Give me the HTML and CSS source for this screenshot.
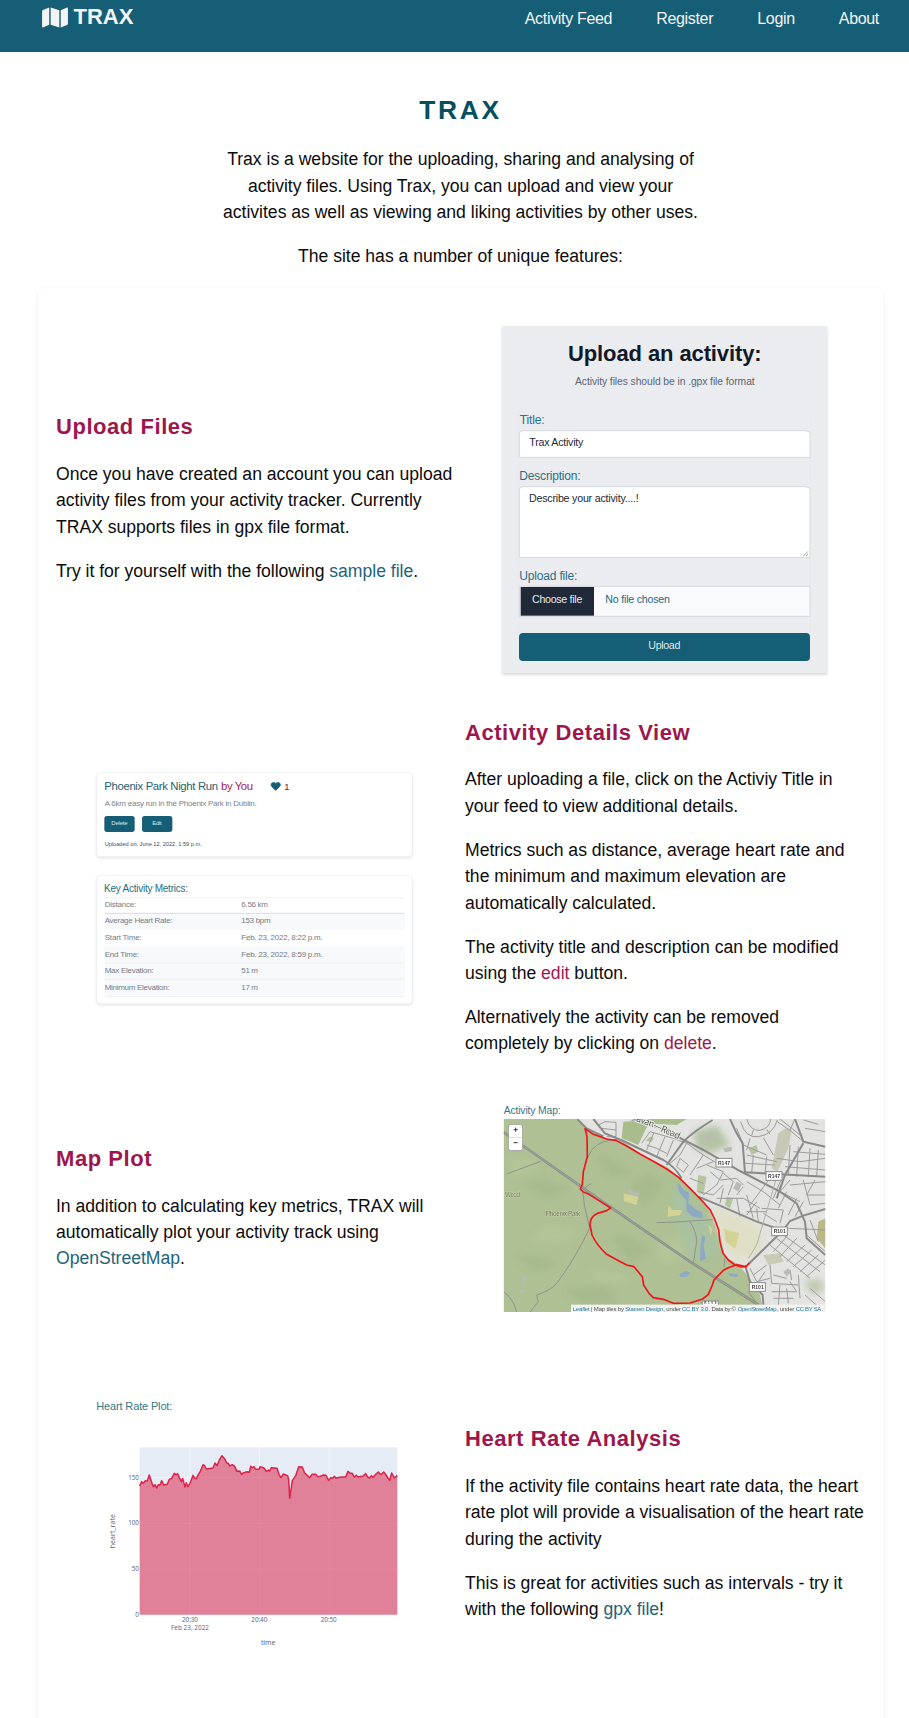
FILE: index.html
```html
<!DOCTYPE html>
<html lang="en">
<head>
<meta charset="utf-8">
<title>TRAX</title>
<link rel="stylesheet" href="styles.css">
</head>
<body>
<header class="navbar">
  <a class="brand">
    <svg class="brand-icon" viewBox="0 0 576 512"><path fill="currentColor" d="M0 117v346c0 12 12 20 23 15l137-62V32L20 88C8 93 0 104 0 117zM192 416l192 64V96L192 32zM554 34L416 96v384l140-56c12-5 20-16 20-30V49c0-11-11-19-22-15z"/></svg>
    <span>TRAX</span>
  </a>
  <nav class="links"><a>Activity Feed</a><a>Register</a><a>Login</a><a>About</a></nav>
</header>
<main class="page">
  <section class="intro">
    <h1>TRAX</h1>
    <p>Trax is a website for the uploading, sharing and analysing of<br>activity files. Using Trax, you can upload and view your<br>activites as well as viewing and liking activities by other uses.</p>
    <p>The site has a number of unique features:</p>
  </section>
  <section class="features">
    <article class="row row-upload">
      <div class="copy">
        <h2>Upload Files</h2>
        <p>Once you have created an account you can upload<br>activity files from your activity tracker. Currently<br>TRAX supports files in gpx file format.</p>
        <p>Try it for yourself with the following <a class="teal">sample file</a>.</p>
      </div>
      <svg class="shot" width="350" height="384" viewBox="0 -12 1050 1152">
        <rect class="form-shadow" x="36" y="48" width="975" height="1041" fill="#ebecf0"/>
        <path d="M86 320V970M961 320V970" stroke="#e5e7eb" stroke-width="2"/>
        <text x="234" y="152" font-size="66" font-weight="700" fill="#111827" textLength="581">Upload an activity:</text>
        <text x="255" y="225" font-size="31" fill="#5b6472" textLength="539">Activity files should be in .gpx file format</text>
        <g font-size="36" fill="#2b6f84">
          <text x="89" y="343" textLength="75">Title:</text>
          <text x="88" y="511" textLength="184">Description:</text>
          <text x="88" y="809" textLength="174">Upload file:</text>
        </g>
        <g fill="#fff" stroke="#d5d9e0" stroke-width="3">
          <path d="M88 442V374Q88 362 100 362H948Q960 362 960 374V442Z"/>
          <path d="M88 742V542Q88 530 100 530H948Q960 530 960 542V742Z"/>
          <rect x="88" y="829" width="872" height="90" fill="#f9fafc"/>
        </g>
        <path d="M940 738L954 724M948 738L954 732" stroke="#777" stroke-width="2"/>
        <rect x="92" y="831" width="220" height="86" fill="#1f2937"/>
        <g font-size="32">
          <text x="118" y="409" fill="#1f2937" textLength="162">Trax Activity</text>
          <text x="117" y="577" fill="#1f2937" textLength="329">Describe your activity....!</text>
          <text x="126" y="880" fill="#e8eaee" textLength="151">Choose file</text>
          <text x="346" y="880" fill="#246b80" textLength="194">No file chosen</text>
        </g>
        <rect x="87" y="969" width="873" height="84" rx="12" fill="#155e75"/>
        <text x="475" y="1017" font-size="32" fill="#dfe9ed" textLength="96">Upload</text>
      </svg>
    </article>

    <article class="row row-details">
      <svg class="shot" width="350" height="266" viewBox="1 -3 1050 798">
        <g class="tile" fill="#fff" stroke="#ececee" stroke-width="2">
          <rect x="51" y="53" width="947" height="252" rx="12"/>
          <rect x="51" y="361" width="947" height="385" rx="12"/>
        </g>
        <text x="74" y="105" font-size="34" fill="#1d6372" textLength="341">Phoenix Park Night Run</text>
        <text x="424" y="105" font-size="34" fill="#a82257" textLength="96">by You</text>
        <path d="M588 106L577 95C571 87 577 83 582 83Q587 83 588 86Q590 83 595 83C601 83 605 88 599 95Z" fill="#155e75" stroke="#155e75" stroke-width="3"/>
        <text x="614" y="105" font-size="28" fill="#333">1</text>
        <text x="75" y="153" font-size="24" fill="#7b828c" textLength="456">A 6km easy run in the Phoenix Park in Dublin.</text>
        <rect x="74" y="183" width="91" height="48" rx="8" fill="#155e75"/>
        <rect x="187" y="183" width="91" height="48" rx="8" fill="#155e75"/>
        <g font-size="18" fill="#dbe6ea">
          <text x="95" y="210" textLength="49">Delete</text>
          <text x="218" y="210" textLength="28">Edit</text>
        </g>
        <text x="75" y="273" font-size="17" fill="#474e5c" textLength="291">Uploaded on: June 12, 2022, 1:59 p.m.</text>
        <text x="73" y="411" font-size="30" fill="#2a6d7e" textLength="252">Key Activity Metrics:</text>
        <path d="M75 476H975V526H75ZM75 573H975V725H75Z" fill="#f8f9fb"/>
        <path d="M75 428H975M75 624H975M75 673H975M75 725H975" stroke="#e9ebee" stroke-width="2"/>
        <path d="M75 475H975" stroke="#d9dbe1" stroke-width="3"/>
        <g font-size="24" fill="#757c87">
          <text x="75" y="456" textLength="95">Distance:</text><text x="485" y="456" textLength="80">6.56 km</text>
          <text x="75" y="505" textLength="204">Average Heart Rate:</text><text x="485" y="505" textLength="88">153 bpm</text>
          <text x="75" y="555" textLength="111">Start Time:</text><text x="485" y="555" textLength="244">Feb. 23, 2022, 8:22 p.m.</text>
          <text x="75" y="605" textLength="104">End Time:</text><text x="485" y="605" textLength="244">Feb. 23, 2022, 8:59 p.m.</text>
          <text x="75" y="654" textLength="147">Max Elevation:</text><text x="485" y="654" textLength="50">51 m</text>
          <text x="75" y="704" textLength="195">Minimum Elevation:</text><text x="485" y="704" textLength="50">17 m</text>
        </g>
      </svg>
      <div class="copy">
        <h2>Activity Details View</h2>
        <p>After uploading a file, click on the Activiy Title in<br>your feed to view additional details.</p>
        <p>Metrics such as distance, average heart rate and<br>the minimum and maximum elevation are<br>automatically calculated.</p>
        <p>The activity title and description can be modified<br>using the <a class="pink">edit</a> button.</p>
        <p>Alternatively the activity can be removed<br>completely by clicking on <a class="pink">delete</a>.</p>
      </div>
    </article>

    <article class="row row-map">
      <div class="copy">
        <h2>Map Plot</h2>
        <p>In addition to calculating key metrics, TRAX will<br>automatically plot your activity track using<br><a class="teal">OpenStreetMap</a>.</p>
      </div>
      <svg class="shot" width="350" height="225" viewBox="0 0 1050 675">
        <defs>
          <clipPath id="map"><rect x="41" y="72" width="965" height="579"/></clipPath>
          <filter id="soft"><feGaussianBlur stdDeviation="9"/></filter>
        </defs>
        <text x="41" y="58" font-size="31" fill="#34788a" textLength="171">Activity Map:</text>
        <g clip-path="url(#map)">
          <rect x="41" y="72" width="965" height="579" fill="#e3e3e1"/>
          <!-- parkland -->
          <path d="M41 72H262L290 102L345 130L400 140L470 188L530 215L570 248L625 305L662 350L690 430L705 485L745 508L775 545L810 600L822 651H41Z" fill="#aec094"/>
          <g filter="url(#soft)">
            <path d="M540 260L580 290L655 370L690 470L640 500L600 490L560 380Z" fill="#a9c1a0"/>
            <path d="M665 345L700 340L800 385Q835 440 800 480L745 500L710 470L690 420Z" fill="#dfdfc8"/>
            <g fill="#9fb184" opacity=".45"><path d="M90 270Q160 240 230 280L180 310ZM320 180Q380 190 420 240L360 250ZM80 480Q160 470 210 510L130 530ZM360 420Q450 420 480 470L420 500ZM230 580L350 570L380 630L260 620ZM420 270L480 230L520 270L460 330Z"/></g>
            <g fill="#b9ca9c" opacity=".5"><path d="M50 190L120 180L150 220L70 250ZM160 390L270 400L230 450L120 440ZM500 440L580 420L590 490L510 510ZM300 520L420 540L400 570L310 560Z"/></g>
          </g>
          <path d="M400 80L480 75L445 150L395 130Z M465 72H590L560 90L490 86Z" fill="#a9bc8c"/>
          <path d="M610 110L680 90L720 150L660 175L620 160Z" fill="#b4c3a5" filter="url(#soft)"/>
          <path d="M865 115L890 98L905 105L895 160L862 230L845 220Z" fill="#c9c7b6"/>
          <path d="M625 240L650 245L640 300L620 290Z M775 160L800 150L805 170L785 180ZM710 305L730 310L720 340L705 330ZM480 125L492 128L485 140L466 137Z" fill="#b5c5a0"/>
          <path d="M985 380L1006 370V460L980 430Z" fill="#b9b88b"/>
          <path d="M820 480L870 475L880 500L835 510Z" fill="#cccab5"/>
          <path d="M940 560L985 550L1006 580L970 600Z" fill="#c0cbb0" filter="url(#soft)"/>
          <path d="M702 402L748 415L735 462L708 440Z M535 330L548 345L578 345L570 360L533 365ZM400 295L445 305L440 330L402 318ZM655 390L668 400L662 422Z" fill="#d3d395"/>
          <!-- water -->
          <g fill="#8da9c4">
            <path d="M563 268Q572 266 580 285L598 293L595 325L620 345L637 352L638 370L610 365L588 348L590 318L567 290Z"/>
            <path d="M636 420L646 425L641 455L648 492L630 498L631 460Z M568 538L588 527L601 533L590 546L572 546ZM714 534L745 538L742 546L720 544Z"/>
          </g>
          <!-- paths in the park -->
          <g fill="none" stroke="#8e9389" stroke-width="3">
            <path d="M50 237L152 199M380 134Q330 135 305 165L292 190M278 285L283 330L299 400Q250 500 200 565Q185 585 140 600L145 620L120 651M41 590Q70 610 80 651M500 383L560 381L600 378L668 374M600 380Q620 410 620 440L610 505M278 283L304 265M705 486L702 515M775 590L800 625"/>
          </g>
          <path d="M41 112L100 153L345 325L600 500L806 630" fill="none" stroke="#8a8e88" stroke-width="8"/>
          <path d="M41 112L100 153L345 325L600 500L806 630" fill="none" stroke="#aab0a5" stroke-width="2"/>
          <!-- minor streets -->
          <g fill="none" stroke="#9b9b9b" stroke-width="3">
            <path d="M325 90L345 80L378 82V125H350M335 100L378 105M455 145L480 110L550 130L590 145L570 180L540 205M470 150L500 160L530 175M492 112L470 165M525 125L500 185M550 135L530 185M590 145L640 180L690 210M640 180L600 240M570 190L595 210L580 232L560 215Z"/>
            <path d="M650 210L700 230L680 270L640 300M600 250L640 265M660 230L690 255L740 250L760 270M620 220L670 200M700 235L730 260L715 300M625 290L670 300L700 270M680 310L760 310L810 340M690 325L700 280M740 310L750 365M770 300L790 370M800 320L770 360M760 275L740 300"/>
            <path d="M752 80Q765 130 805 125Q850 118 862 75M770 72Q780 108 810 106Q840 100 842 72M790 105L785 122M830 103L840 118M862 80L905 110L940 140M870 72L930 120M915 72L900 105M940 75L985 88M945 100L1006 110M740 100L760 150L830 180M780 130L770 165M820 128L850 180M770 180L860 200M765 205L855 210M790 180L785 235M830 185L825 235M900 150L895 240M860 190L930 200L1006 190M925 155L920 245M960 160L955 245M985 165L980 245M910 170L1006 178M885 215L1006 225"/>
            <path d="M770 260L820 290L870 330M840 250L780 330M875 250L850 310M900 255L870 290L930 320M900 270L1006 260M940 255L960 330M975 255L950 300L1006 300M890 290L865 340M920 310L895 360M815 340L880 345M820 355L860 380M770 350L830 350M800 340L805 380M880 345L870 385M940 320L915 365M960 330L1006 325"/>
            <path d="M840 450L960 550M860 430L990 530M880 420L1006 510M850 470L890 425M870 485L920 430M890 500L945 450M910 515L965 465M930 530L985 480M950 545L1006 495M945 380L950 420L1006 470M960 375L985 440M895 400L1006 405"/>
            <path d="M780 520L800 560L840 550M790 540L830 510M805 560L825 530M840 510L845 565L925 570M850 540L890 550M845 590L920 590L900 560M850 610H910M925 540L930 610M945 600L990 640M960 580L1006 620M870 570L865 630M890 580L895 625M900 525L905 555"/>
          </g>
          <!-- main roads -->
          <g fill="none" stroke="#8a8a8a" stroke-width="6">
            <path d="M262 72L290 100L340 124M310 72L345 115L400 138L520 195Q555 215 575 250M420 72L510 98L640 165L750 228L870 290L920 325L945 380L950 430L1006 480"/>
            <path d="M668 75Q610 110 580 140L530 210M720 72Q735 110 758 145L765 232L1006 245M915 72L940 140L1006 155M940 145L885 240L860 310M625 305L690 332L800 380L860 400M1006 342L940 362L900 378L880 405L775 508M765 510L780 560L818 600L822 651M1006 635L940 650"/>
            <path d="M862 240L800 450L775 490" stroke-width="3" stroke="#b0b0a8"/>
          </g>
          <path d="M655 118L668 132L660 140L642 130Z M895 520L902 530L890 545L880 530ZM93 545H110V555H103V563H97V555ZM84 586H108V592H86ZM408 285L420 280L430 292L448 292V302L425 300ZM740 260L755 268L745 290L730 280ZM700 160L725 155V168L705 172Z" fill="#b7bab5"/>
          <path id="navan" d="M420 71L490 98L572 136" fill="none"/>
          <text class="map-label" font-size="27" fill="#4b4b4b" stroke="#e9e9e6" stroke-width="6" paint-order="stroke" textLength="158"><textPath href="#navan">Navan—Road</textPath></text>
          <!-- road shields -->
          <g fill="#fff" stroke="#8a8a8a" stroke-width="3">
            <rect x="678" y="190" width="48" height="26"/><rect x="828" y="230" width="48" height="26"/><rect x="845" y="396" width="47" height="26"/><rect x="778" y="563" width="48" height="26"/><rect x="637" y="618" width="48" height="26"/>
          </g>
          <g font-size="15" font-weight="700" fill="#444">
            <text x="684" y="209" textLength="36">R147</text><text x="834" y="248" textLength="36">R147</text><text x="851" y="414" textLength="36">R101</text><text x="785" y="582" textLength="36">R101</text><text x="643" y="628" font-size="9" textLength="36">R109</text>
          </g>
          <g font-size="20" fill="#656b4a" stroke="#dbe0c4" stroke-width="2" paint-order="stroke">
            <text x="45" y="305" textLength="45">Wood</text><text x="167" y="364" textLength="104">Phoenix Park</text>
          </g>
          <!-- recorded track -->
          <path d="M777 505L768 515L755 516L735 510L715 495L699 475L690 440L686 405L675 375L661 345L634 315L600 280L566 247L530 222L490 199L450 177L410 153L380 137L350 132L310 118L285 101L291 125L292 185L280 230L277 268L271 282L280 291L297 298L345 328L362 339L350 347L320 356Q300 366 300 390L306 420Q320 450 350 478L380 494L410 510L432 515L457 545L461 570L477 595L490 608L520 613L550 625L600 624L638 612L655 598L667 570L672 555L700 526L715 518L740 509L760 513" fill="none" stroke="#f01418" stroke-width="5" stroke-linejoin="round" stroke-linecap="round"/>
          <rect x="55" y="88" width="43" height="80" rx="6" fill="#aaa"/>
          <rect x="57" y="90" width="39" height="75" rx="5" fill="#fff"/>
          <path d="M57 127H96" stroke="#ccc" stroke-width="2"/>
          <path d="M71 104H83M77 98V110M71 143H83" stroke="#333" stroke-width="3"/>
          <rect x="243" y="629" width="763" height="22" fill="#f2f2f0"/>
          <g font-size="18" fill="#555">
            <text x="248" y="647" fill="#267fa8" textLength="51">Leaflet</text><text x="303" y="647" textLength="99">| Map tiles by</text>
            <text x="406" y="647" fill="#267fa8" textLength="113">Stamen Design</text><text x="520" y="647" textLength="53">, under</text>
            <text x="576" y="647" fill="#267fa8" textLength="79">CC BY 3.0</text><text x="656" y="647" textLength="82">. Data by ©</text>
            <text x="743" y="647" fill="#267fa8" textLength="117">OpenStreetMap</text><text x="861" y="647" textLength="52">, under</text>
            <text x="917" y="647" fill="#267fa8" textLength="77">CC BY SA</text><text x="995" y="647">.</text>
          </g>
        </g>
      </svg>
    </article>

    <article class="row row-heart">
      <svg class="shot" width="350" height="284" viewBox="1 -12 1050 852">
        <text x="50" y="74" font-size="33" fill="#34788a" textLength="228">Heart Rate Plot:</text>
        <rect x="180" y="187" width="773" height="502" fill="#e5ecf6"/>
        <path d="M331 187V689M539 187V689M748 187V689M180 278H953M180 415H953M180 552H953" stroke="#fff" stroke-opacity=".7" stroke-width="2.5"/>
        <path fill="#dc143c" fill-opacity=".5" d="M180 689V303L186 290L191 295L197 287L202 289L209 270L216 292L221 305L226 299L231 309L236 299L241 300L246 287L252 300L263 298L269 283L276 280L284 265L289 269L294 266L299 278L305 290L309 280L316 306L320 293L325 305L331 295L340 271L345 279L350 281L356 268L361 261L370 239L375 242L380 252L400 249L406 234L412 242L420 223L427 212L435 221L441 234L446 235L450 243L458 239L465 244L472 259L480 258L486 268L492 263L503 260L509 262L513 244L518 248L523 245L528 253L538 253L541 245L553 249L560 259L566 255L570 258L575 248L592 250L598 268L604 278L611 267L624 272L627 283L630 340L638 287L648 272L657 245L668 246L675 264L690 278L697 268L709 268L714 275L722 274L731 270L739 271L747 286L753 278L760 279L764 274L769 279L785 276L798 276L805 259L812 265L818 265L824 276L830 271L836 276L850 273L858 266L864 276L870 279L875 272L880 277L889 267L896 261L901 267L906 267L912 261L920 271L925 279L930 286L936 264L944 279L953 271V689Z"/>
        <path fill="none" stroke="#dc143c" stroke-opacity=".9" stroke-width="4.5" stroke-linejoin="round" d="M180 303L186 290L191 295L197 287L202 289L209 270L216 292L221 305L226 299L231 309L236 299L241 300L246 287L252 300L263 298L269 283L276 280L284 265L289 269L294 266L299 278L305 290L309 280L316 306L320 293L325 305L331 295L340 271L345 279L350 281L356 268L361 261L370 239L375 242L380 252L400 249L406 234L412 242L420 223L427 212L435 221L441 234L446 235L450 243L458 239L465 244L472 259L480 258L486 268L492 263L503 260L509 262L513 244L518 248L523 245L528 253L538 253L541 245L553 249L560 259L566 255L570 258L575 248L592 250L598 268L604 278L611 267L624 272L627 283L630 340L638 287L648 272L657 245L668 246L675 264L690 278L697 268L709 268L714 275L722 274L731 270L739 271L747 286L753 278L760 279L764 274L769 279L785 276L798 276L805 259L812 265L818 265L824 276L830 271L836 276L850 273L858 266L864 276L870 279L875 272L880 277L889 267L896 261L901 267L906 267L912 261L920 271L925 279L930 286L936 264L944 279L953 271"/>
        <g class="map-label" font-size="19" fill="#505e80">
          <g text-anchor="end"><text x="178" y="285">150</text><text x="178" y="421">100</text><text x="178" y="559">50</text><text x="178" y="696">0</text></g>
          <text x="307" y="710" textLength="48">20:30</text><text x="274" y="735" textLength="114">Feb 23, 2022</text>
          <text x="515" y="710" textLength="48">20:40</text><text x="723" y="710" textLength="48">20:50</text>
          <text x="544" y="780" font-size="21" textLength="43">time</text>
          <text transform="translate(106 490) rotate(-90)" font-size="21" textLength="103">heart_rate</text>
        </g>
      </svg>
      <div class="copy">
        <h2>Heart Rate Analysis</h2>
        <p>If the activity file contains heart rate data, the heart<br>rate plot will provide a visualisation of the heart rate<br>during the activity</p>
        <p>This is great for activities such as intervals - try it<br>with the following <a class="teal">gpx file</a>!</p>
      </div>
    </article>
  </section>
</main>
</body>
</html>
```
FILE: styles.css
```css
* { box-sizing: border-box; }

body {
  margin: 0;
  height: 1718px;
  overflow: hidden;
  background: #fff;
  color: #0c0c0c;
  font-family: "Nimbus Sans", "Liberation Sans", Arial, sans-serif;
  font-size: 17.6px;
  line-height: 26.4px;
}

.navbar {
  display: flex;
  justify-content: space-between;
  height: 52px;
  padding: 0 30px 0 42px;
  background: #165e75;
  color: #f3f4f6;
}

.brand {
  display: flex;
  align-items: center;
  gap: 5.5px;
  height: 34px;
  font-size: 22px;
  font-weight: 700;
}

.brand-icon { width: 26px; height: 23px; }

.links {
  display: flex;
  gap: 44px;
  height: 38px;
  align-items: center;
  font-size: 16px;
  letter-spacing: -.32px;
}

.page { padding: 0 26px 0 38px; }

.intro {
  height: 236px;
  padding-top: 39px;
  text-align: center;
}

h1 {
  margin: 0 0 15.6px;
  color: #054f5f;
  font-size: 26.4px;
  line-height: 39.6px;
  letter-spacing: 2.64px;
}

p {
  margin: 0 0 17.6px;
  white-space: nowrap;
  letter-spacing: -.02px;
}

.copy p:last-child { margin-bottom: 0; }

.features {
  padding: 18px 18px 60px 18px;
  border-radius: 8px;
  box-shadow: 0 2px 6px rgba(0, 0, 0, .07);
}

.row {
  display: grid;
  grid-template-columns: 399px 400px;
  column-gap: 10px;
  align-items: center;
}

.row-upload { height: 384px; }
.row-details { height: 394px; }
.row-map { height: 247px; }
.row-heart { height: 384px; }

.row-details .shot,
.row-heart .shot { margin-right: 1px; }

h2 {
  margin: -.4px 0 18px;
  color: #9d174d;
  font-size: 22px;
  line-height: 31.68px;
  letter-spacing: .55px;
}

.teal { color: #1d647b; }
.pink { color: #9d174d; }

.shot { display: block; justify-self: center; overflow: visible; }

.form-shadow { filter: drop-shadow(0 6px 5px rgba(0, 0, 0, .15)); }
.tile rect { filter: drop-shadow(0 4px 3px rgba(0, 0, 0, .1)); }
.map-label { font-family: "Open Sans", sans-serif; }
```
